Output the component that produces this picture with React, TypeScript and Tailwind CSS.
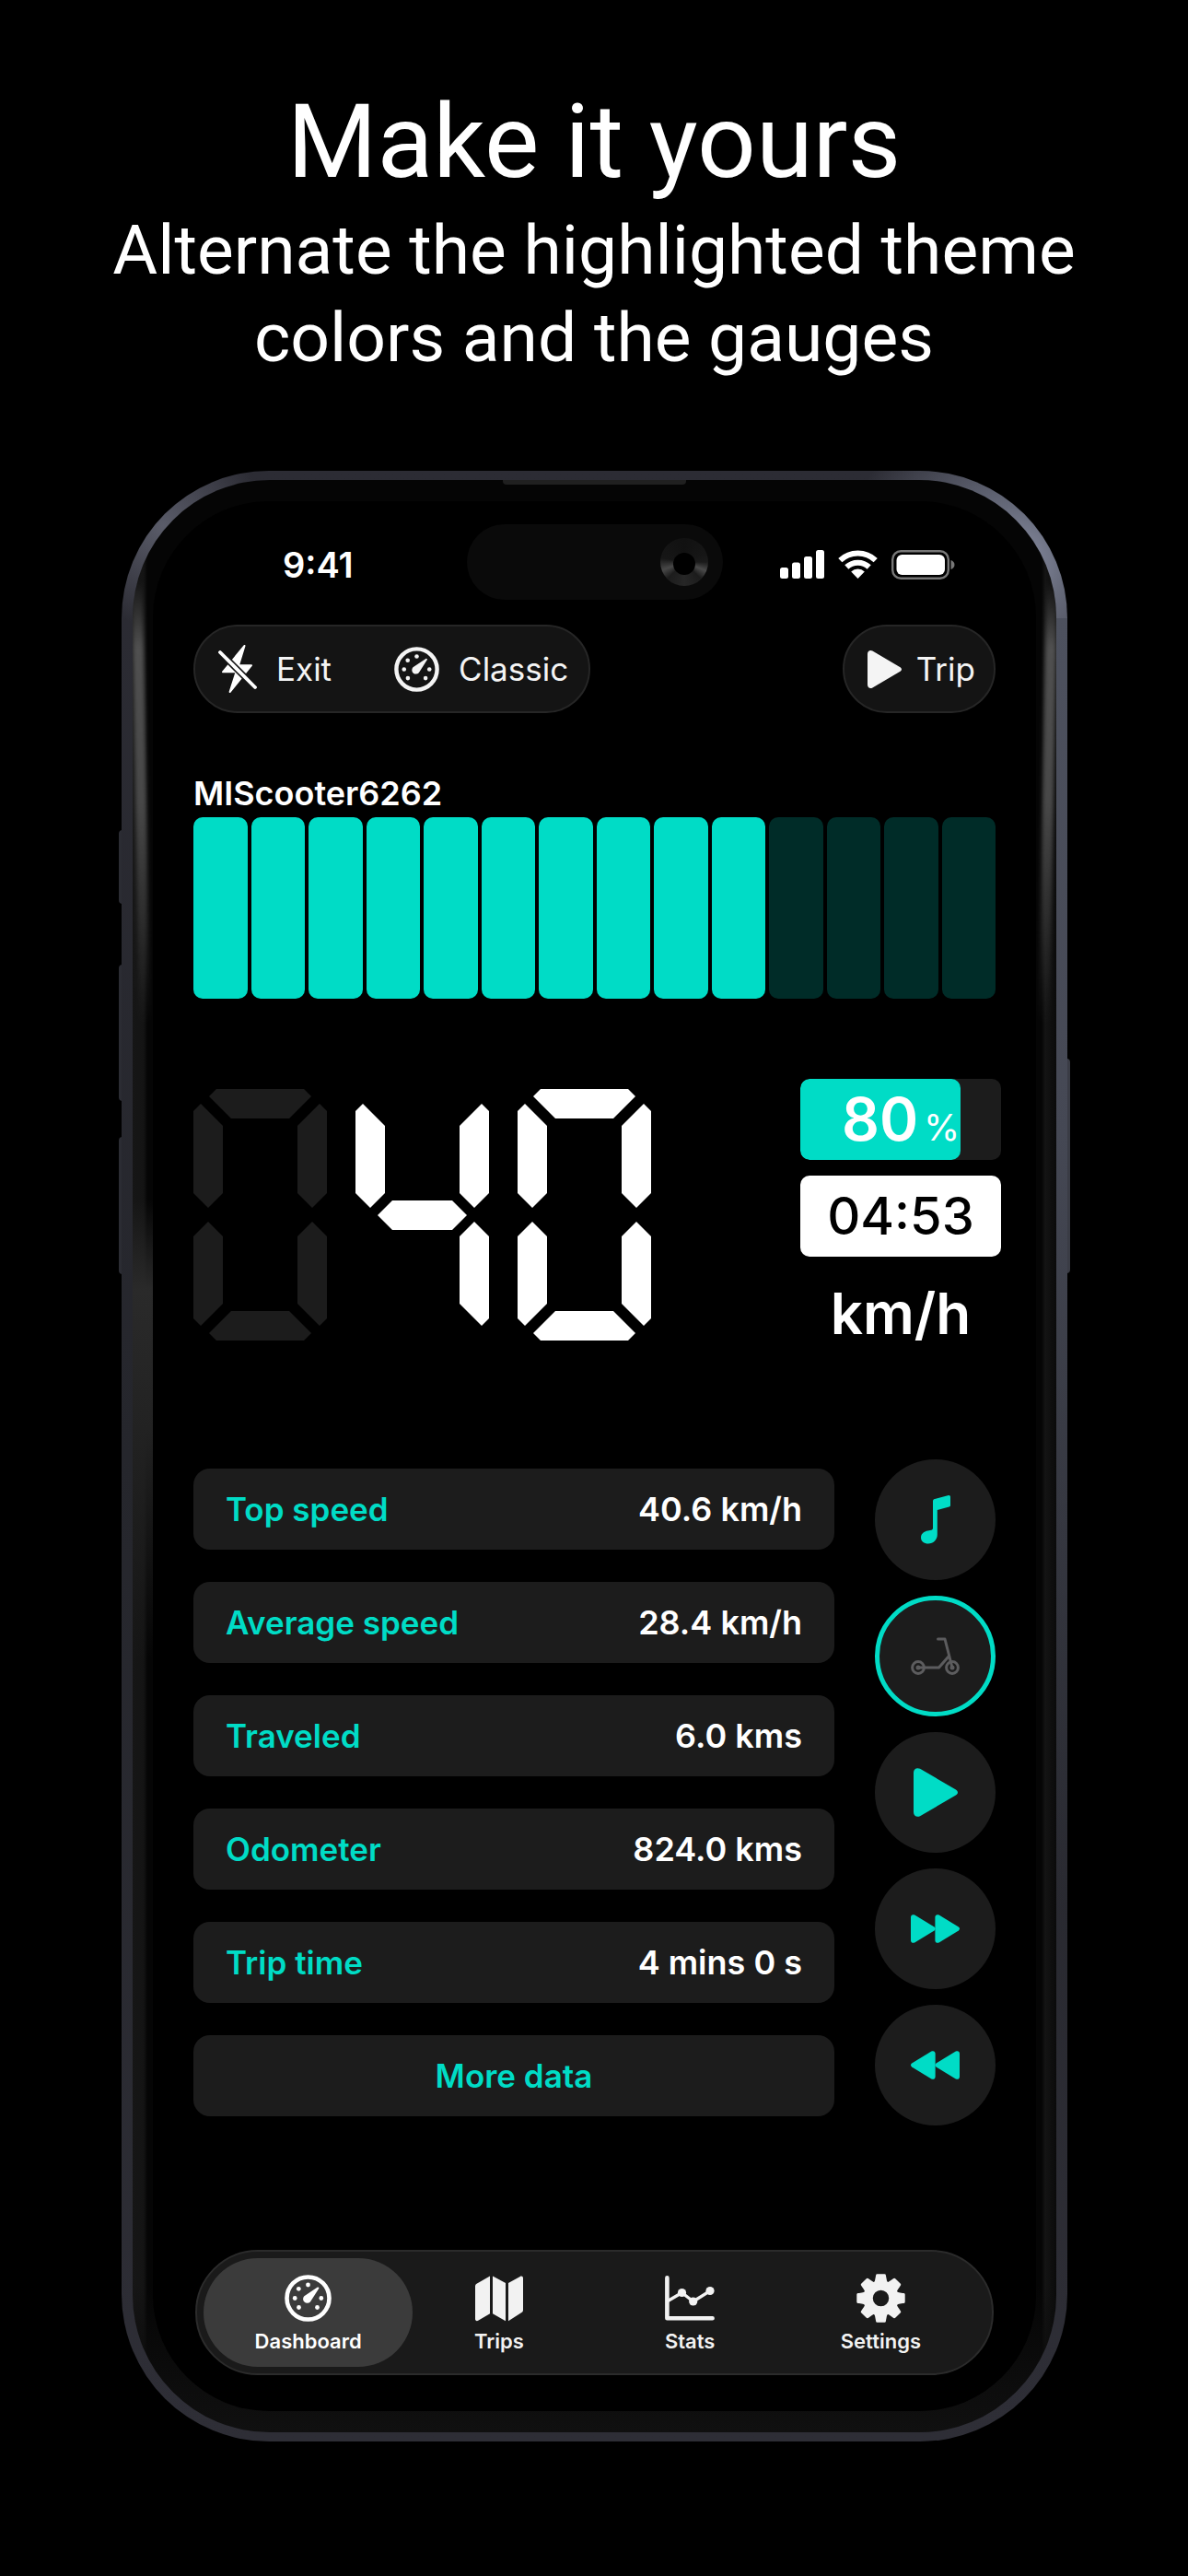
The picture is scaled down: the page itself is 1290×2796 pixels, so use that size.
import React from "react";

const SEGMENTS: Record<string, string> = {
  a: "17,8 25,0 120,0 128,8 104,32 41,32",
  b: "137,16 145,24 145,113 129,129 113,113 113,40",
  c: "129,144 145,160 145,249 137,257 113,233 113,160",
  d: "41,241 104,241 128,265 120,273 25,273 17,265",
  e: "16,144 32,160 32,233 8,257 0,249 0,160",
  f: "8,16 32,40 32,113 16,129 0,113 0,24",
  g: "24,137 40,121 105,121 121,137 105,153 40,153",
};

const DIGITS: Record<string, string[]> = {
  "0": ["a", "b", "c", "d", "e", "f"],
  "4": ["b", "c", "f", "g"],
};

function Digit({ value, dim }: { value: string; dim?: boolean }) {
  return (
    <svg width="145" height="273" viewBox="0 0 145 273" fill={dim ? "#1c1c1c" : "#ffffff"} aria-hidden="true">
      {DIGITS[value].map((s) => (
        <polygon key={s} points={SEGMENTS[s]} />
      ))}
    </svg>
  );
}

function GaugeIcon({ size }: { size: number }) {
  const dots = [
    [25.5, 11],
    [15.3, 15.3],
    [11.2, 25.5],
    [39.8, 25.5],
    [15.5, 35.5],
    [35.5, 35.5],
  ];
  return (
    <svg width={size} height={size} viewBox="0 0 51 51" fill="currentColor" aria-hidden="true">
      <circle cx="25.5" cy="25.5" r="23" fill="none" stroke="currentColor" strokeWidth="4.6" />
      {dots.map(([x, y]) => (
        <circle key={`${x}-${y}`} cx={x} cy={y} r="2.4" />
      ))}
      <path d="M35.8 13.6c.9-.7 2.1.4 1.4 1.3L27.9 29.4a4.5 4.5 0 1 1-6.6-6.2z" />
    </svg>
  );
}

function BoltSlashIcon() {
  return (
    <svg width="42" height="54" viewBox="0 0 42 54" aria-hidden="true">
      <path d="M28.5 2 5 30.3h14.6L12.6 52 36 23.2H22z" fill="#fff" stroke="#fff" strokeWidth="2" strokeLinejoin="round" />
      <path d="M2 9 40 47" stroke="#141414" strokeWidth="7" />
      <path d="M2 9 40 47" stroke="#fff" strokeWidth="3.8" strokeLinecap="round" />
    </svg>
  );
}

function PlayIcon({ width, height }: { width: number; height: number }) {
  return (
    <svg width={width} height={height} viewBox="0 0 48 53" preserveAspectRatio="none" fill="currentColor" aria-hidden="true">
      <path d="M0 5C0 1 3.6-1 7 .8L45.5 23.2C48.8 25 48.8 28 45.5 29.8L7 52.2C3.6 54 0 52 0 48z" />
    </svg>
  );
}

function ForwardIcon({ back }: { back?: boolean }) {
  const tri = "M0 3C0 .6 2 -.6 4.2 .6L25.5 13.6C27 14.6 27 16.4 25.5 17.4L4.2 30.4C2 31.6 0 30.4 0 28z";
  return (
    <svg width="53" height="31" viewBox="0 0 53 31" fill="currentColor" aria-hidden="true">
      <g transform={back ? "matrix(-1 0 0 1 53 0)" : undefined}>
        <path d={tri} />
        <path d={tri} transform="translate(26.4 0)" />
      </g>
    </svg>
  );
}

function NoteIcon() {
  return (
    <svg width="32" height="53" viewBox="0 0 32 53" fill="currentColor" aria-hidden="true">
      <path d="M13 6.4c0-1.2.8-2.2 2-2.4L30 .1c1-.3 2 .5 2 1.6v9c0 .9-.6 1.6-1.4 1.8L17.8 16v26.5c0 6-4.5 10-9.8 10-4.6 0-8-2.8-8-6.6 0-4.2 3.2-6.6 7.4-7.4l3.8-.8c1.2-.3 1.8-1 1.8-2.2z" />
    </svg>
  );
}

function ScooterIcon() {
  return (
    <svg width="53" height="42" viewBox="0 0 53 42" fill="none" stroke="#5c5c5e" strokeWidth="3" strokeLinecap="round" strokeLinejoin="round" aria-hidden="true">
      <circle cx="8" cy="33" r="6.4" />
      <circle cx="45" cy="33" r="6.4" />
      <path d="M8 33h22.5L41 21M29.5 2H37l8 31" />
      <circle cx="8" cy="33" r="1" />
      <circle cx="45" cy="33" r="1" />
    </svg>
  );
}

function MapIcon() {
  return (
    <svg width="52" height="50" viewBox="0 0 52 50" fill="currentColor" aria-hidden="true">
      <path d="M0 11.6c0-1.2.5-2.2 1.6-2.8L16 .5v40.7L3.2 48.8C1.6 49.7 0 48.8 0 47z" />
      <path d="M19 .5 33 8v41.3l-14-8z" />
      <path d="M36 8 48.8.9C50.4 0 52 .9 52 2.7v34.6c0 1.2-.5 2.2-1.6 2.8L36 49.3z" />
    </svg>
  );
}

function StatsIcon() {
  return (
    <svg width="54" height="49" viewBox="0 0 54 49" fill="none" stroke="currentColor" strokeLinecap="round" strokeLinejoin="round" aria-hidden="true">
      <path d="M2.4 2.4v43.8H51.6" strokeWidth="4.6" />
      <path d="M4 27 18.5 18.5 30.7 28 49 16.5" strokeWidth="3.4" />
      <g fill="currentColor" stroke="none">
        <circle cx="18.5" cy="18.5" r="4.6" />
        <circle cx="30.7" cy="28" r="4.6" />
        <circle cx="49" cy="16.5" r="4.6" />
      </g>
    </svg>
  );
}

function GearIcon() {
  return (
    <svg width="53" height="53" viewBox="-26.5 -26.5 53 53" fill="currentColor" stroke="currentColor" aria-hidden="true">
      <circle r="14" fill="none" strokeWidth="10.5" />
      {[0, 45, 90, 135, 180, 225, 270, 315].map((a) => (
        <path key={a} transform={`rotate(${a})`} d="M-6-16C-4.8-19-4.6-21-4-24.8H4C4.6-21 4.8-19 6-16z" strokeWidth="2.8" strokeLinejoin="round" />
      ))}
    </svg>
  );
}

function StatusIcons() {
  return (
    <div className="flex items-center justify-end gap-[15px] pt-[5px] pr-[88px]">
      <svg width="48" height="31" viewBox="0 0 48 31" fill="#fff" aria-label="Signal">
        <rect x="0" y="19" width="9" height="12" rx="2.5" />
        <rect x="13" y="13.5" width="9" height="17.5" rx="2.5" />
        <rect x="26" y="7" width="9" height="24" rx="2.5" />
        <rect x="39" y="0" width="9" height="31" rx="2.5" />
      </svg>
      <svg width="43" height="31" viewBox="0 0 43 31" aria-label="Wi-Fi">
        <g fill="none" stroke="#fff" strokeWidth="6">
          <path d="M2.3 11.2A27.8 27.8 0 0 1 40.7 11.2" />
          <path d="M9.3 18.5A17.8 17.8 0 0 1 33.7 18.5" />
        </g>
        <path d="M21.5 31 14.2 23.5A10.5 10.5 0 0 1 28.8 23.5z" fill="#fff" />
      </svg>
      <svg width="69" height="32" viewBox="0 0 69 32" aria-label="Battery">
        <rect x="1.2" y="1.2" width="60.6" height="29.6" rx="9" fill="none" stroke="#777" strokeWidth="2.4" />
        <rect x="5.5" y="5" width="52.5" height="22" rx="6" fill="#fff" />
        <path d="M64.5 11c2.5.8 4 2.7 4 5s-1.5 4.2-4 5z" fill="#777" />
      </svg>
    </div>
  );
}

const stats = [
  ["Top speed", "40.6 km/h"],
  ["Average speed", "28.4 km/h"],
  ["Traveled", "6.0 kms"],
  ["Odometer", "824.0 kms"],
  ["Trip time", "4 mins 0 s"],
];

const actions = [
  { label: "Music", icon: <NoteIcon /> },
  { label: "Scooter", icon: <ScooterIcon />, ring: true },
  { label: "Play", icon: <PlayIcon width={48} height={53} /> },
  { label: "Next track", icon: <ForwardIcon /> },
  { label: "Previous track", icon: <ForwardIcon back /> },
];

const tabs = [
  { label: "Dashboard", icon: <GaugeIcon size={51} />, active: true },
  { label: "Trips", icon: <MapIcon /> },
  { label: "Stats", icon: <StatsIcon /> },
  { label: "Settings", icon: <GearIcon /> },
];

function Screen() {
  return (
    <div className="relative rounded-[126px] bg-black pt-[25px] pb-[39px]">
      <div className="grid h-[82px] grid-cols-[1fr_278px_1fr] items-center">
        <div className="pt-[5px] pl-[141px] text-[38px] leading-[44px] font-semibold">9:41</div>
        <div className="flex h-full items-center justify-end rounded-full bg-[#0a0a0a] pr-4">
          <div className="flex size-[52px] items-center justify-center rounded-full bg-[conic-gradient(#111_0deg,#161616_70deg,#1a1a1a_90deg,#4a4a4a_112deg,#1c1c1c_135deg,#262626_180deg,#1c1c1c_225deg,#484848_250deg,#161616_280deg,#111_360deg)]">
            <div className="mt-1 size-6 rounded-full bg-black" />
          </div>
        </div>
        <StatusIcons />
      </div>

      <div className="px-[44px]">
        <div className="mt-[27px] flex justify-between text-[35px] leading-[44px] text-[#f4f4f4]">
          <div className="flex h-24 items-center gap-[68px] rounded-full border-2 border-[#262626] bg-[#141414] pr-[22px] pl-[25px]">
            <button className="flex items-center gap-[21px]">
              <BoltSlashIcon />
              Exit
            </button>
            <button className="flex items-center gap-[21px]">
              <GaugeIcon size={49} />
              Classic
            </button>
          </div>
          <button className="flex h-24 items-center gap-4 rounded-full border-2 border-[#262626] bg-[#141414] pr-[20px] pl-[25px]">
            <PlayIcon width={37} height={41} />
            Trip
          </button>
        </div>

        <h2 className="mt-[65px] text-[36px] leading-[44px] font-semibold">MIScooter6262</h2>
        <div className="mt-1 grid h-[197px] grid-cols-14 gap-1" role="meter" aria-label="Power" aria-valuemin={0} aria-valuemax={14} aria-valuenow={10}>
          {Array.from({ length: 14 }, (_, i) => (
            <div key={i} className={i < 10 ? "rounded-[10px] bg-[#00dcc6]" : "rounded-[10px] bg-[#002c28]"} />
          ))}
        </div>

        <div className="mt-[87px] flex items-start justify-between">
          <div className="mt-[11px] flex gap-[31px]" role="img" aria-label="40">
            <Digit value="0" dim />
            <Digit value="4" />
            <Digit value="0" />
          </div>
          <div className="-mr-[6px] flex w-[218px] flex-col">
            <div className="h-[88px] overflow-hidden rounded-[10px] bg-[#1c1c1c]">
              <div className="flex h-full w-4/5 items-baseline justify-end gap-[6px] rounded-[10px] bg-[#00dcc6] pr-px">
                <span className="text-[64px] leading-[88px] font-semibold">80</span>
                <span className="text-[40px] leading-[44px]">%</span>
              </div>
            </div>
            <div className="mt-[17px] rounded-[10px] bg-white text-center text-[56px] leading-[88px] font-medium text-black">04:53</div>
            <div className="mt-[22px] text-center text-[62px] leading-[80px] font-semibold">km/h</div>
          </div>
        </div>

        <div className="mt-[118px] flex items-center gap-[44px]">
          <div className="flex flex-1 flex-col gap-[35px] text-[35px] leading-[44px] font-semibold">
            <dl className="flex flex-col gap-[35px]">
              {stats.map(([k, v]) => (
                <div key={k} className="flex h-[88px] items-center justify-between rounded-[18px] bg-[#1c1c1c] px-[35px]">
                  <dt className="text-[#00dcc6]">{k}</dt>
                  <dd className="text-[36px]">{v}</dd>
                </div>
              ))}
            </dl>
            <button className="h-[88px] rounded-[18px] bg-[#1c1c1c] text-[#00dcc6]">More data</button>
          </div>
          <div className="flex flex-col gap-[17px] text-[#00dcc6]">
            {actions.map((a) => (
              <button
                key={a.label}
                aria-label={a.label}
                className={
                  a.ring
                    ? "flex size-[131px] items-center justify-center rounded-full border-[5px] border-[#00dcc6] bg-[#1c1c1c]"
                    : "flex size-[131px] items-center justify-center rounded-full bg-[#1c1c1c]"
                }
              >
                {a.icon}
              </button>
            ))}
          </div>
        </div>

        <nav className="mx-[2px] mt-[135px] grid h-[136px] grid-cols-4 rounded-full border-2 border-[#2b2b2b] bg-[#1a1a1a] px-[17px] py-[7px]">
          {tabs.map((t) => (
            <a
              key={t.label}
              href={`#${t.label.toLowerCase()}`}
              className={
                t.active
                  ? "-mx-[10px] flex flex-col items-center rounded-full bg-[#3b3b3b] pt-[17px]"
                  : "-mx-[10px] flex flex-col items-center rounded-full pt-[17px] text-[#f2f2f2]"
              }
            >
              <span className="flex h-[53px] items-center">{t.icon}</span>
              <span className="mt-[6px] text-[22px] leading-[28px] font-semibold">{t.label}</span>
            </a>
          ))}
        </nav>
      </div>
    </div>
  );
}

export default function App() {
  return (
    <main className="min-h-screen bg-black pt-[94px] pb-[147px] font-['Inter',sans-serif] text-white">
      <header className="px-8 text-center font-['Roboto',sans-serif]">
        <h1 className="text-[112px] leading-[120px]">Make it yours</h1>
        <p className="mt-[10px] text-[75px] leading-[95px]">
          Alternate the highlighted theme
          <br />
          colors and the gauges
        </p>
      </header>

      <div className="relative mt-[97px] mr-[131px] ml-[132px]">
        <div className="absolute top-[390px] -left-[3px] h-20 w-2 rounded-l bg-[#2b2c33]" />
        <div className="absolute top-[536px] -left-[3px] h-[148px] w-2 rounded-l bg-[#2b2c33]" />
        <div className="absolute top-[723px] -left-[3px] h-[149px] w-2 rounded-l bg-[#2b2c33]" />
        <div className="absolute top-[638px] -right-[3px] h-[233px] w-2 rounded-r bg-[#3a3c45]" />
        <div className="relative rounded-[160px] bg-[radial-gradient(circle_at_965px_100px,#8f94aa_0px,#666a7a_60px,transparent_180px),radial-gradient(circle_at_45px_60px,#5a5c69_0px,transparent_110px),linear-gradient(#2c2c34,#25262c_50%,#2e2e36)] px-3 py-[10px]">
          <div className="absolute top-[160px] right-0 h-[1400px] w-3 bg-[linear-gradient(#4d515e,#454854_40%,transparent)]" />
          <div className="relative overflow-hidden rounded-[149px] bg-[linear-gradient(to_top,#101010_0px,#0c0c0c_60px,transparent_160px),linear-gradient(to_right,#161616_0px,#141414_12px,#050505_16px,#050505_50%,#050505_calc(100%-16px),#141414_calc(100%-12px),#0a0a0a_100%)] px-[22px] py-[23px]">
            <div className="absolute inset-x-[402px] top-0 h-[5px] rounded-b bg-[#202020]" />
            <div className="absolute top-[110px] left-[3px] h-[480px] w-3 -rotate-1 rounded-full bg-[linear-gradient(transparent,#505050_15%,#484848_50%,transparent)] blur-[2px]" />
            <div className="absolute top-[110px] right-[3px] h-[480px] w-3 rotate-1 rounded-full bg-[linear-gradient(transparent,#505050_15%,#484848_50%,transparent)] blur-[2px]" />
            <div className="absolute top-[780px] left-0 h-[500px] w-[22px] bg-[linear-gradient(transparent,#2a2a2a_20%,#222_50%,transparent)]" />
            <Screen />
          </div>
        </div>
      </div>
    </main>
  );
}
